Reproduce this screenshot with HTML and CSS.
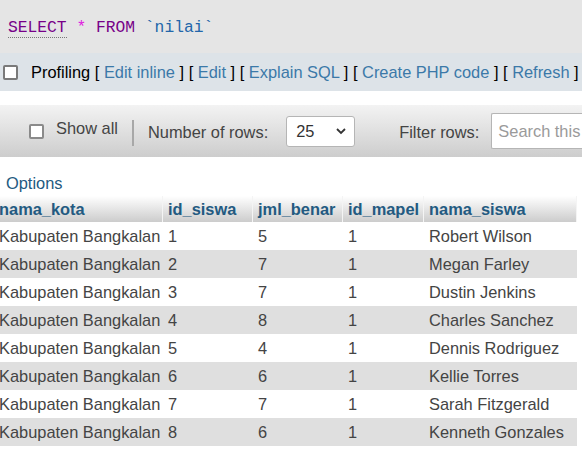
FILE: index.html
```html
<!DOCTYPE html>
<html>
<head>
<meta charset="utf-8">
<link rel="stylesheet" href="styles.css">
</head>
<body>
<div class="sqlbox">
  <code class="sql"><span class="kw kw-first">SELECT</span> <span class="op">*</span> <span class="kw">FROM</span> <span class="ident">`nilai`</span></code>
</div>
<div class="profiling">
  <span class="cbox"></span>
  <span class="ptext">Profiling [ <a>Edit inline</a> ] [ <a>Edit</a> ] [ <a>Explain SQL</a> ] [ <a>Create PHP code</a> ] [ <a>Refresh</a> ]</span>
</div>
<div class="toolbar">
  <span class="cbox cbox-tb"></span>
  <span class="showall">Show all</span>
  <span class="sep"></span>
  <span class="label">Number of rows:</span>
  <span class="select">25<svg class="chev" width="12" height="8" viewBox="0 0 12 8"><polyline points="2,2 6,6 10,2" fill="none" stroke="#333" stroke-width="1.8"/></svg></span>
  <span class="label filter">Filter rows:</span>
  <span class="search">Search this</span>
</div>
<div class="options"><a>Options</a></div>
<table class="grid">
  <thead>
    <tr>
      <th class="c1">nama_kota</th>
      <th class="c2">id_siswa</th>
      <th class="c3">jml_benar</th>
      <th class="c4">id_mapel</th>
      <th class="c5">nama_siswa</th>
    </tr>
  </thead>
  <tbody>
    <tr><td>Kabupaten Bangkalan</td><td>1</td><td>5</td><td>1</td><td>Robert Wilson</td></tr>
    <tr><td>Kabupaten Bangkalan</td><td>2</td><td>7</td><td>1</td><td>Megan Farley</td></tr>
    <tr><td>Kabupaten Bangkalan</td><td>3</td><td>7</td><td>1</td><td>Dustin Jenkins</td></tr>
    <tr><td>Kabupaten Bangkalan</td><td>4</td><td>8</td><td>1</td><td>Charles Sanchez</td></tr>
    <tr><td>Kabupaten Bangkalan</td><td>5</td><td>4</td><td>1</td><td>Dennis Rodriguez</td></tr>
    <tr><td>Kabupaten Bangkalan</td><td>6</td><td>6</td><td>1</td><td>Kellie Torres</td></tr>
    <tr><td>Kabupaten Bangkalan</td><td>7</td><td>7</td><td>1</td><td>Sarah Fitzgerald</td></tr>
    <tr><td>Kabupaten Bangkalan</td><td>8</td><td>6</td><td>1</td><td>Kenneth Gonzales</td></tr>
  </tbody>
</table>
</body>
</html>
```
FILE: styles.css
```css
html, body {
  margin: 0;
  padding: 0;
  background: #fff;
  overflow: hidden;
}
body {
  font-family: "Liberation Sans", Arial, sans-serif;
  font-size: 16.4px;
  color: #444;
  width: 582px;
}
a {
  color: #235a81;
  text-decoration: none;
}
.sqlbox {
  background: #e5e5e5;
  height: 53px;
  box-sizing: border-box;
  padding: 17px 0 0 8px;
}
.sql {
  font-family: "Liberation Mono", "Courier New", monospace;
  font-size: 16.3px;
  line-height: 18px;
  white-space: pre;
}
.kw { color: #770088; }
.kw-first { border-bottom: 1px dotted #777; }
.op { color: #e020e0; }
.ident { color: #2266aa; }

.profiling {
  background: #dde3e8;
  height: 38px;
  display: flex;
  align-items: center;
  white-space: nowrap;
}
.cbox {
  display: inline-block;
  width: 11px;
  height: 11px;
  border: 2px solid #7a7a7a;
  border-radius: 2px;
  background: #fff;
  flex: none;
}
.profiling .cbox {
  margin: 1px 13px 0 3px;
}
.ptext {
  color: #000;
}
.ptext a {
  color: #3b79a8;
}

.toolbar {
  margin-top: 14px;
  height: 52px;
  background: linear-gradient(#f3f3f3, #cdcdcd);
  display: flex;
  align-items: center;
  white-space: nowrap;
  color: #444;
}
.toolbar > * {
  flex: none;
}
.cbox-tb {
  margin: 0 12px 0 29px;
  border-color: #8a8a8a;
}
.showall {
  margin-top: -5px;
}
.sep {
  width: 2px;
  height: 26px;
  background: #a8a8a8;
  margin: 3px 14px 0 14px;
}
.label {
  margin-top: 2px;
}
.select {
  margin-left: 18px;
  width: 69px;
  height: 31px;
  box-sizing: border-box;
  border: 1px solid #b5b5b5;
  border-radius: 3px;
  background: #fff;
  display: flex;
  align-items: center;
  padding-left: 9px;
  color: #333;
}
.chev {
  margin-left: auto;
  margin-right: 7px;
}
.filter {
  margin-left: 44px;
}
.toolbar .search {
  flex: 1 1 auto;
  min-width: 0;
  margin-left: 12px;
  height: 36px;
  box-sizing: border-box;
  border: 1px solid #b5b5b5;
  border-right: none;
  border-radius: 2px 0 0 2px;
  background: #fff;
  padding: 0 0 0 6px;
  display: flex;
  align-items: center;
  color: #9a9a9a;
}

.options {
  padding: 17px 0 0 6px;
  height: 22px;
  line-height: 18px;
}

.grid {
  margin-left: -6px;
  border-collapse: separate;
  border-spacing: 0;
  table-layout: fixed;
  width: 583px;
}
.grid th, .grid td {
  box-sizing: border-box;
  padding: 0 4px 0 5px;
  text-align: left;
  white-space: nowrap;
  overflow: hidden;
}
.grid th {
  height: 26px;
  font-weight: bold;
  color: #235a81;
  background: linear-gradient(#ffffff, #cccccc);
  border-right: 1px solid #f4f4f4;
}
.grid td {
  height: 28px;
  padding-top: 1px;
  border-right: 1px solid transparent;
}
.grid .c1 { width: 169px; }
.grid .c2 { width: 90px; }
.grid .c3 { width: 90px; }
.grid .c4 { width: 81px; }
.grid .c5 { width: 153px; }
.grid tbody tr:nth-child(even) td {
  background: #dfdfdf;
}
```
